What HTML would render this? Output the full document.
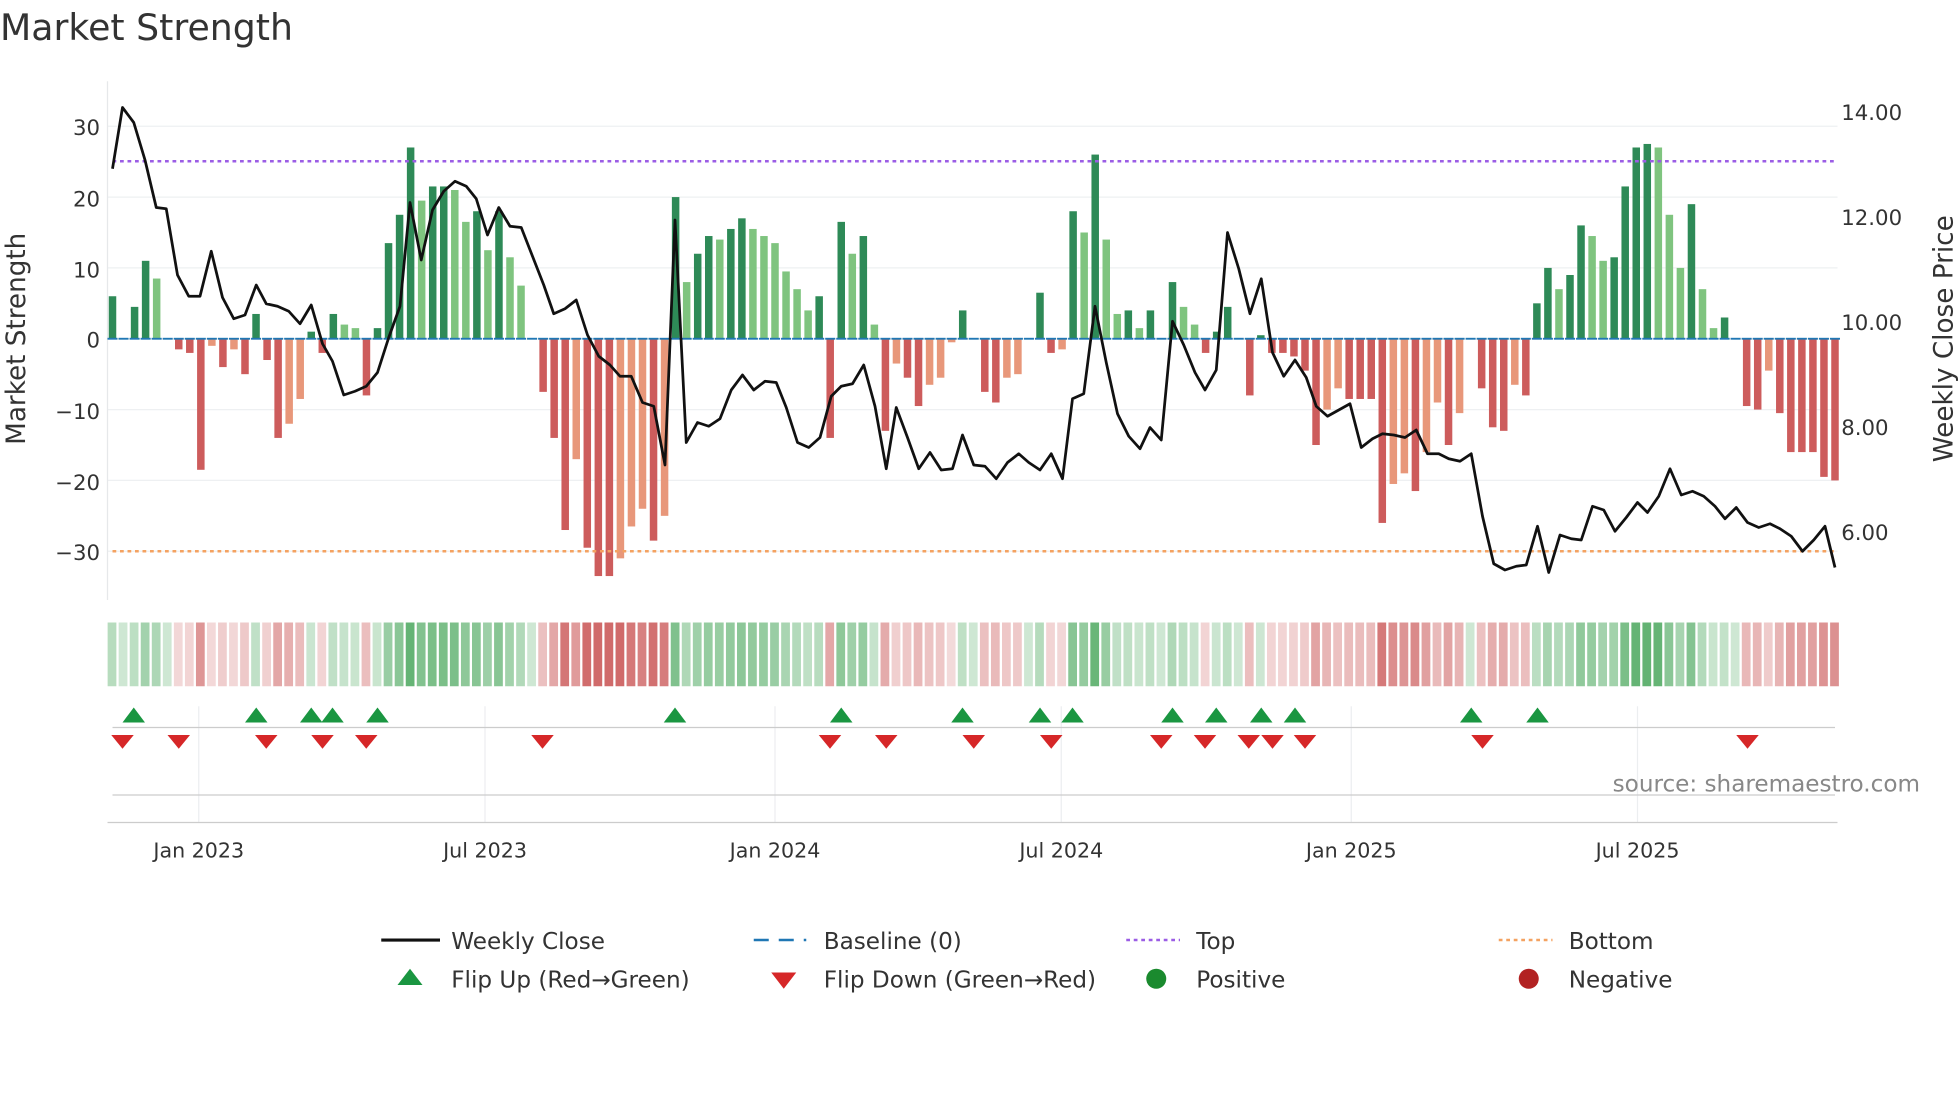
<!DOCTYPE html>
<html><head><meta charset="utf-8"><style>
html,body{margin:0;padding:0;background:#fff;width:1960px;height:1102px;overflow:hidden}
svg{display:block}
text{font-family:"DejaVu Sans","Liberation Sans",sans-serif;fill:#333}
</style></head><body>
<svg id="s" width="1960" height="1102" viewBox="0 0 1568 881.6" xmlns="http://www.w3.org/2000/svg">
<text x="0" y="32" font-size="29">Market Strength</text>
<g id="grid"></g>
<g id="bars"></g>
<line x1="90" y1="129" x2="1470" y2="129" stroke="#9b5de5" stroke-width="2" stroke-dasharray="3,3"/>
<line x1="90" y1="441" x2="1470" y2="441" stroke="#f4a261" stroke-width="2" stroke-dasharray="3,3"/>
<polyline id="price" fill="none" stroke="#111" stroke-width="2.2" stroke-linejoin="round"/>
<g id="heat"></g>
<g id="marks"></g>
<g font-size="17" text-anchor="end">
<text x="80" y="108">30</text><text x="80" y="165">20</text><text x="80" y="222">10</text><text x="80" y="278">0</text>
<text x="80" y="335">−10</text><text x="80" y="392">−20</text><text x="80" y="448">−30</text>
</g>
<g font-size="17">
<text x="1473" y="96">14.00</text><text x="1473" y="180">12.00</text><text x="1473" y="264">10.00</text>
<text x="1473" y="348">8.00</text><text x="1473" y="432">6.00</text>
</g>
<text transform="translate(20,271) rotate(-90)" font-size="21" text-anchor="middle">Market Strength</text>
<text transform="translate(1562,271) rotate(-90)" font-size="21" text-anchor="middle">Weekly Close Price</text>
<text x="1536" y="633" font-size="18.5" text-anchor="end" style="fill:#888">source: sharemaestro.com</text>
<g font-size="16.5" text-anchor="middle">
<text x="159" y="686">Jan 2023</text><text x="388" y="686">Jul 2023</text><text x="620" y="686">Jan 2024</text>
<text x="849" y="686">Jul 2024</text><text x="1081" y="686">Jan 2025</text><text x="1310" y="686">Jul 2025</text>
</g>
<g font-size="18.5">
<line x1="305" y1="752" x2="352" y2="752" stroke="#111" stroke-width="2.5"/><text x="361" y="759">Weekly Close</text>
<line x1="603" y1="752" x2="645" y2="752" stroke="#1f77b4" stroke-width="2" stroke-dasharray="12,8"/><text x="659" y="759">Baseline (0)</text>
<line x1="901" y1="752" x2="944" y2="752" stroke="#9b5de5" stroke-width="2" stroke-dasharray="3,3"/><text x="957" y="759">Top</text>
<line x1="1199" y1="752" x2="1242" y2="752" stroke="#f4a261" stroke-width="2" stroke-dasharray="3,3"/><text x="1255" y="759">Bottom</text>
<polygon points="318,788 338,788 328,775" fill="#1a9641"/><text x="361" y="790">Flip Up (Red→Green)</text>
<polygon points="617,778 637,778 627,791" fill="#d62728"/><text x="659" y="790">Flip Down (Green→Red)</text>
<circle cx="925" cy="783" r="8" fill="#1a8a2e"/><text x="957" y="790">Positive</text>
<circle cx="1223" cy="783" r="8" fill="#b22222"/><text x="1255" y="790">Negative</text>
</g>
</svg>
<script>
var NS="http://www.w3.org/2000/svg";
function el(p,t,a){var e=document.createElementNS(NS,t);for(var k in a)e.setAttribute(k,a[k]);document.getElementById(p).appendChild(e);return e;}
var v=[6,0,4.5,11,8.5,0,-1.5,-2,-18.5,-1,-4,-1.5,-5,3.5,-3,-14,-12,-8.5,1,-2,3.5,2,1.5,-8,1.5,13.5,17.5,27,19.5,21.5,21.5,21,16.5,18,12.5,18,11.5,7.5,0,-7.5,-14,-27,-17,-29.5,-33.5,-33.5,-31,-26.5,-24,-28.5,-25,20,8,12,14.5,14,15.5,17,15.5,14.5,13.5,9.5,7,4,6,-14,16.5,12,14.5,2,-13,-3.5,-5.5,-9.5,-6.5,-5.5,-0.5,4,0,-7.5,-9,-5.5,-5,0,6.5,-2,-1.5,18,15,26,14,3.5,4,1.5,4,0,8,4.5,2,-2,1,4.5,0,-8,0.5,-2,-2,-2.5,-4.5,-15,-10,-7,-8.5,-8.5,-8.5,-26,-20.5,-19,-21.5,-16,-9,-15,-10.5,0,-7,-12.5,-13,-6.5,-8,5,10,7,9,16,14.5,11,11.5,21.5,27,27.5,27,17.5,10,19,7,1.5,3,0,-9.5,-10,-4.5,-10.5,-16,-16,-16,-19.5,-20];
var step=(1468-90)/(v.length-1);
[30,20,10,0,-10,-20,-30].forEach(function(t){el("grid","line",{x1:86,x2:1470,y1:271-t*5.667,y2:271-t*5.667,stroke:"#eef0f2","stroke-width":1});});
el("grid","line",{x1:86,x2:86,y1:65,y2:480,stroke:"#e6e8ea"});
[159,388,620,849,1081,1310].forEach(function(x){el("grid","line",{x1:x,x2:x,y1:565,y2:658,stroke:"#eceef0"});});
el("grid","line",{x1:90,x2:1468,y1:582,y2:582,stroke:"#ccc"});
el("grid","line",{x1:90,x2:1468,y1:636,y2:636,stroke:"#ccc"});
el("grid","line",{x1:86,x2:1470,y1:658,y2:658,stroke:"#ccc"});
for(var i=0;i<v.length;i++){
 var x=90+i*step,val=v[i],p=i?v[i-1]:0,c;
 if(val>=0)c=(val>=p)?"#2e8a57":"#7fc47f";else c=(val<=p)?"#cd5c5c":"#e8977a";
 var y=271-val*5.667;
 if(val!==0)el("bars","rect",{x:x-3,y:Math.min(y,271),width:6,height:Math.abs(val*5.667),fill:c});
 el("bars","line",{x1:x-4,x2:x+4,y1:271,y2:271,stroke:"#1f77b4","stroke-width":1.5});
 var a=Math.min(1,Math.abs(val)/30);
 var hc=val>=0?"rgba(60,160,80,"+(0.25+0.6*a)+")":"rgba(200,80,80,"+(0.2+0.65*a)+")";
 el("heat","rect",{x:x-3.9,y:498,width:7,height:51,fill:hc});
}
var pts="90,135 98,86 107,98 116,128 125,166 133,167 142,220 151,237 160,237 169,201 178,238 187,255 196,252 205,228 213,243 222,245 231,249 240,259 249,244 258,275 266,289 275,316 284,313 293,309 302,298 311,270 320,245 328,162 337,208 346,168 355,153 364,145 373,149 381,159 390,188 399,166 408,181 417,182 426,205 435,228 443,251 452,247 461,240 470,268 479,285 488,292 496,301 505,301 514,322 523,325 532,372 540,176 549,354 558,338 567,341 576,335 585,312 594,300 603,312 612,305 621,306 629,326 638,354 647,358 656,350 665,317 673,309 682,307 691,292 700,325 709,375 717,326 726,350 735,375 744,362 753,376 762,375 770,348 779,372 788,373 797,383 806,370 815,363 823,370 832,376 841,363 850,383 858,319 867,315 876,245 885,290 894,331 903,349 912,359 920,342 929,352 938,257 947,276 956,298 964,312 973,296 982,186 991,215 1000,251 1009,223 1018,282 1027,301 1036,288 1045,302 1053,325 1062,333 1071,328 1080,323 1089,358 1098,351 1106,347 1115,348 1124,350 1133,344 1142,363 1151,363 1159,367 1168,369 1177,363 1186,413 1195,451 1204,456 1213,453 1221,452 1230,421 1239,458 1248,428 1257,431 1265,432 1274,405 1283,408 1292,425 1301,414 1310,402 1318,410 1327,397 1336,375 1345,396 1354,393 1363,397 1372,405 1380,415 1389,406 1398,418 1407,422 1416,419 1424,423 1433,429 1442,441 1451,432 1460,421 1468,454";
document.getElementById("price").setAttribute("points",pts);
[107,205,249,266,302,540,673,770,832,858,938,973,1009,1036,1177,1230].forEach(function(x){el("marks","polygon",{points:(x-9)+",578 "+(x+9)+",578 "+x+",566",fill:"#1a9641"});});
[98,143,213,258,293,434,664,709,779,841,929,964,999,1018,1044,1186,1398].forEach(function(x){el("marks","polygon",{points:(x-9)+",588 "+(x+9)+",588 "+x+",599",fill:"#d62728"});});
</script>
</body></html>
